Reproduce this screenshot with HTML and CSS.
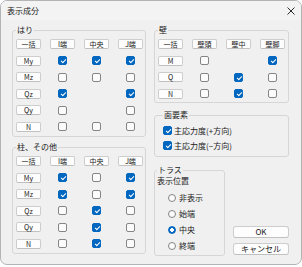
FILE: index.html
```html
<!DOCTYPE html>
<html>
  <head>
    <title>表示成分</title>
    <meta name="viewport" content="width=device-width, initial-scale=1.0" />
    <link rel="stylesheet" href="styles.css">
  </head>
  <body>
    <div class="window">
      <div class="titlebar">
        <span class="title">表示成分</span>
        <svg class="close" width="8" height="8" viewBox="0 0 8 8">
          <path d="M0.5 0.5 L7.5 7.5 M7.5 0.5 L0.5 7.5" stroke="#2b2b2b" stroke-width="1" fill="none" />
        </svg>
      </div>
      <div class="client">
        <div class="col">
          <fieldset class="group">
            <legend>はり</legend>
            <div class="table">
              <span class="btn">一括</span><span class="btn">I端</span><span class="btn">中央</span><span class="btn">J端</span>
              <span class="btn">My</span><span class="cb on"></span><span class="cb on"></span><span class="cb on"></span>
              <span class="btn">Mz</span><span class="cb"></span><span class="cb"></span><span class="cb"></span>
              <span class="btn">Qz</span><span class="cb on"></span><span></span><span class="cb on"></span>
              <span class="btn">Qy</span><span class="cb"></span><span></span><span class="cb"></span>
              <span class="btn">N</span><span class="cb"></span><span class="cb"></span><span class="cb"></span>
            </div>
          </fieldset>
          <fieldset class="group column-group">
            <legend>柱、その他</legend>
            <div class="table">
              <span class="btn">一括</span><span class="btn">I端</span><span class="btn">中央</span><span class="btn">J端</span>
              <span class="btn">My</span><span class="cb on"></span><span class="cb"></span><span class="cb on"></span>
              <span class="btn">Mz</span><span class="cb on"></span><span class="cb"></span><span class="cb on"></span>
              <span class="btn">Qz</span><span class="cb"></span><span class="cb on"></span><span class="cb"></span>
              <span class="btn">Qy</span><span class="cb"></span><span class="cb on"></span><span class="cb"></span>
              <span class="btn">N</span><span class="cb"></span><span class="cb on"></span><span class="cb"></span>
            </div>
          </fieldset>
        </div>
        <div class="col right">
          <fieldset class="group wall">
            <legend>壁</legend>
            <div class="table">
              <span class="btn">一括</span><span class="btn">壁頭</span><span class="btn">壁中</span><span class="btn">壁脚</span>
              <span class="btn">M</span><span class="cb"></span><span></span><span class="cb on"></span>
              <span class="btn">Q</span><span class="cb"></span><span class="cb on"></span><span class="cb"></span>
              <span class="btn">N</span><span class="cb"></span><span class="cb on"></span><span class="cb"></span>
            </div>
          </fieldset>
          <fieldset class="group plane">
            <legend>面要素</legend>
            <div class="check-row"><span class="cb on"></span>主応力度(+方向)</div>
            <div class="check-row"><span class="cb on"></span>主応力度(−方向)</div>
          </fieldset>
          <div class="bottom">
            <fieldset class="group truss">
              <legend>トラス</legend>
              <div class="caption">表示位置</div>
              <div class="radios">
                <div class="radio-row"><span class="radio"></span>非表示</div>
                <div class="radio-row"><span class="radio"></span>始端</div>
                <div class="radio-row"><span class="radio on"></span>中央</div>
                <div class="radio-row"><span class="radio"></span>終端</div>
              </div>
            </fieldset>
            <div class="actions">
              <span class="btn wide">OK</span>
              <span class="btn wide">キャンセル</span>
            </div>
          </div>
        </div>
      </div>
    </div>
  </body>
</html>
```

FILE: styles.css
```css
* {
  box-sizing: border-box;
}
body {
  margin: 0;
  background: #ffffff;
  font-family: "Noto Sans CJK JP", "Noto Sans", sans-serif;
  font-size: 8px;
  color: #1a1a1a;
}
.window {
  width: 302px;
  height: 265px;
  border: 1px solid #b4b4b4;
  border-radius: 7px;
  background: #f0f0f0;
  overflow: hidden;
}
.titlebar {
  height: 19px;
  display: flex;
  align-items: center;
  justify-content: space-between;
  padding: 0 6px 0 6px;
  background: #f3f3f3;
}
.title {
  line-height: 10px;
}
.client {
  display: flex;
  gap: 8px;
  padding: 5px 0 0 11px;
}
.col {
  width: 134px;
  display: flex;
  flex-direction: column;
}
.col.right {
  width: 135px;
}
.group {
  margin: 0;
  padding: 1px 3px 1px 3px;
  border: 1px solid #d6d6d6;
  border-radius: 3px;
  min-width: 0;
}
legend {
  padding: 0 1px;
  line-height: 10px;
  font-size: 8px;
}
.column-group {
  margin-top: 5px;
}
.table {
  display: grid;
  grid-template-columns: repeat(4, 25px);
  grid-auto-rows: 16.5px;
  column-gap: 9px;
  align-items: center;
  justify-items: center;
}
.btn {
  width: 25px;
  height: 10px;
  display: flex;
  align-items: center;
  justify-content: center;
  border: 1px solid #cdcdcd;
  border-bottom-color: #c0c0c0;
  border-radius: 2px;
  background-color: #fdfdfd;
  font-size: 7px;
  line-height: 8px;
  color: #1a1a1a;
}
.cb {
  width: 9px;
  height: 9px;
  border: 1px solid #858585;
  border-radius: 2px;
  background: #fbfbfb;
  flex: none;
}
.cb.on {
  background: #0067c0;
  border-color: #0067c0;
}
.cb.on::after {
  content: "";
  display: block;
  width: 4px;
  height: 2px;
  margin: 2px 0 0 1.5px;
  border-left: 1px solid #fff;
  border-bottom: 1px solid #fff;
  transform: rotate(-45deg);
}
.wall {
  padding-bottom: 0;
}
.plane {
  margin-top: 7px;
  padding: 3px 3px 3px 8px;
}
.check-row {
  height: 15px;
  display: flex;
  align-items: center;
  gap: 2px;
  line-height: 10px;
}
.bottom {
  margin-top: 8px;
  display: flex;
  justify-content: space-between;
  align-items: flex-end;
}
.truss {
  width: 71px;
  padding: 1px 3px 1px 2px;
}
.caption {
  line-height: 10px;
}
.radios {
  margin-top: 4px;
  padding-left: 11px;
}
.radio-row {
  height: 16px;
  display: flex;
  align-items: center;
  gap: 3px;
  line-height: 10px;
}
.radio {
  width: 8px;
  height: 8px;
  border: 1px solid #858585;
  border-radius: 50%;
  background: #fbfbfb;
}
.radio.on {
  border-color: #0067c0;
  background: radial-gradient(circle, #ffffff 0 1.6px, #0067c0 2.1px);
}
.actions {
  display: flex;
  flex-direction: column;
  gap: 5px;
  margin-bottom: 1px;
}
.btn.wide {
  width: 56px;
  height: 12px;
  border-radius: 3px;
  font-size: 8px;
}
```
